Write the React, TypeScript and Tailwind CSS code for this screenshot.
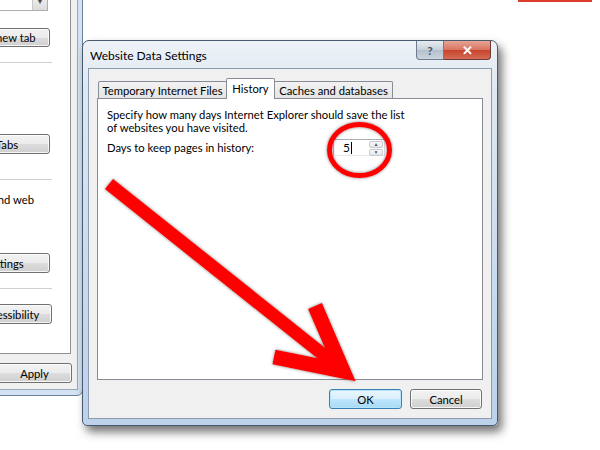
import React from 'react';

const ui = "font-['Lato',sans-serif] text-[11.25px] text-black leading-[13px]";

const btnFace =
  'bg-[linear-gradient(#f2f2f2_0%,#ebebeb_50%,#dddddd_51%,#cfcfcf_100%)] border border-[#707070] rounded-[3px] shadow-[inset_0_0_0_1px_rgba(255,255,255,0.8)]';

interface BtnProps {
  label: string;
  className?: string;
}

const WinButton: React.FC<BtnProps> = ({ label, className }) => (
  <div className={`${btnFace} flex items-center justify-center whitespace-nowrap shrink-0 ${className ?? ''}`}>
    {label}
  </div>
);

const Separator: React.FC<{ className?: string }> = ({ className }) => (
  <div className={`h-[1px] w-[200px] bg-[#d0d0d0] ${className ?? ''}`} />
);

// Internet Options window, mostly off the left edge
const BackWindow = () => (
  <div className="absolute left-[-222px] top-[-20px] w-[305px] h-[416px] bg-[#d3e2f2] border border-[#6f8299] rounded-b-[6px] flex flex-col">
    <div className="mr-[4px] mb-[5px] h-[410px] bg-[#f0f0f0] border-r border-b border-[#9aa8b8] flex flex-col items-end">
      <div className="mr-[6px] w-[292px] h-[373px] bg-white border border-[#8e8f8f] flex flex-col items-end">
        <div className="mt-[9px] mr-[22px] w-[120px] h-[20px] border border-[#abadb3] bg-white flex justify-end">
          <div className="w-[15px] h-full bg-[linear-gradient(#f6f6f6,#dcdcdc)] border-l border-[#c8c8c8] flex items-center justify-center text-[7px] text-[#4a4a4a]">
            ▼
          </div>
        </div>
        <WinButton label="Use new tab" className="mt-[17px] mr-[20px] w-[90px] h-[19px]" />
        <Separator className="mt-[15px] mr-[18px]" />
        <WinButton label="Tabs" className="mt-[71px] mr-[20px] w-[86px] h-[20px]" />
        <Separator className="mt-[25px] mr-[18px]" />
        <div className="mt-[12px] mr-[36px] h-[15px] whitespace-nowrap leading-[15px]">saved passwords, and web</div>
        <WinButton label="Settings" className="mt-[46px] mr-[20px] w-[92px] h-[20px]" />
        <Separator className="mt-[15px] mr-[18px]" />
        <WinButton label="Accessibility" className="mt-[15px] mr-[18px] w-[86px] h-[20px]" />
      </div>
      <WinButton label="Apply" className="mt-[9px] mr-[5px] w-[75px] h-[20px]" />
    </div>
  </div>
);

const Tab: React.FC<{ label: string; active?: boolean; className?: string }> = ({ label, active, className }) =>
  active ? (
    <div className={`relative z-10 h-[21px] pt-[3px] bg-white border border-b-0 border-[#898c95] rounded-t-[2px] whitespace-nowrap text-center ${className ?? ''}`}>
      {label}
    </div>
  ) : (
    <div className={`h-[18px] pt-[2px] bg-[linear-gradient(#f2f2f2,#e3e3e3)] border border-b-0 border-[#898c95] rounded-t-[2px] whitespace-nowrap text-center ${className ?? ''}`}>
      {label}
    </div>
  );

const SpinBox = () => (
  <div className="w-[52px] h-[17px] flex border border-[#abadb3] border-r-[#dbdfe6] border-b-[#e3e9ef] bg-white">
    <div className="flex-1 flex items-center pl-[9px] text-[12px]">
      5<span className="ml-[1px] w-[1px] h-[12px] bg-black" />
    </div>
    <div className="w-[16px] flex flex-col gap-[1px] p-[1px]">
      <div className="flex-1 bg-[linear-gradient(#fafafa,#e6e6e6)] border border-[#c6c9cf] rounded-[2px] flex items-center justify-center text-[5px] leading-none text-[#4d6185]">
        ▲
      </div>
      <div className="flex-1 bg-[linear-gradient(#fafafa,#e6e6e6)] border border-[#c6c9cf] rounded-[2px] flex items-center justify-center text-[5px] leading-none text-[#4d6185]">
        ▼
      </div>
    </div>
  </div>
);

const Dialog = () => (
  <div className="absolute left-[82px] top-[40px] w-[416px] h-[386px] border border-[#4a5a6e] rounded-t-[7px] rounded-b-[5px] bg-[linear-gradient(#eef2f7_0%,#dfe8f2_12%,#c9dbee_60%,#bcd2ea_100%)] shadow-[4px_6px_10px_rgba(0,0,0,0.55)] flex flex-col">
    <div className="h-[27px] flex items-start shrink-0">
      <span className="ml-[7px] mt-[8px] text-[12px] leading-[14px]">Website Data Settings</span>
      <div className="ml-auto mr-[6px] flex">
        <div className="w-[28px] h-[19px] border border-[#6d7c8f] border-t-0 rounded-bl-[4px] bg-[linear-gradient(#e6ebf0,#c7d0da_50%,#b3bfcc_51%,#cbd5df)] flex items-center justify-center text-[12px] font-bold text-[#4a5563]">
          ?
        </div>
        <div className="w-[47px] h-[19px] border border-[#6e3a36] border-t-0 border-l-0 rounded-br-[4px] bg-[linear-gradient(#e8a493,#d8725f_50%,#c7432c_51%,#d56b55)] flex items-center justify-center text-[13px] font-bold text-white">
          ✕
        </div>
      </div>
    </div>
    <div className="mx-[5px] mb-[6px] flex-1 bg-[#f0f0f0] border border-[#8c9cb0] flex flex-col pl-[8px] pr-[8px] pt-[9px]">
      <div className="flex items-end h-[21px] pl-[1px]">
        <Tab label="Temporary Internet Files" className="w-[129px]" />
        <Tab label="History" active className="-ml-[1px] w-[49px]" />
        <Tab label="Caches and databases" className="-ml-[1px] w-[119px]" />
      </div>
      <div className="-mt-[1px] h-[282px] bg-white border border-[#898c95] pl-[9px] pt-[9px]">
        <p>Specify how many days Internet Explorer should save the list</p>
        <p>of websites you have visited.</p>
        <div className="mt-[5px] flex items-center">
          <span className="w-[226px]">Days to keep pages in history:</span>
          <SpinBox />
        </div>
      </div>
      <div className="mt-[9px] pr-[1px] flex justify-end gap-[8px]">
        <div className="w-[73px] h-[20px] flex items-center justify-center rounded-[3px] border border-[#3c7fb1] bg-[linear-gradient(#eaf6fd_0%,#d9f0fc_50%,#bee6fd_51%,#a7d9f5_100%)] shadow-[inset_0_0_0_1px_#b6e4f9]">
          OK
        </div>
        <WinButton label="Cancel" className="w-[72px] h-[20px]" />
      </div>
    </div>
  </div>
);

const Annotations = () => (
  <svg className="absolute left-0 top-0 pointer-events-none" width="600" height="450" viewBox="0 0 600 450">
    <defs>
      <filter id="sh" x="-20%" y="-20%" width="140%" height="140%">
        <feDropShadow dx="0" dy="0" stdDeviation="1.6" floodColor="#3a3a3a" floodOpacity="0.7" />
      </filter>
    </defs>
    <ellipse cx="359.5" cy="150" rx="30" ry="25.5" fill="none" stroke="#ff0000" strokeWidth="5" filter="url(#sh)" />
    <g filter="url(#sh)">
      <line x1="109" y1="184" x2="340" y2="368" stroke="#ff0000" strokeWidth="13" />
      <polyline points="315,306 343,371 274,357" fill="none" stroke="#ff0000" strokeWidth="15" strokeLinejoin="miter" />
    </g>
  </svg>
);

export default function App() {
  return (
    <div className={`relative w-[600px] h-[450px] overflow-hidden bg-white ${ui}`}>
      <div className="absolute top-0 left-[518px] w-[74px] h-[2px] bg-[#dd3b2b]" />
      <BackWindow />
      <Dialog />
      <Annotations />
    </div>
  );
}
